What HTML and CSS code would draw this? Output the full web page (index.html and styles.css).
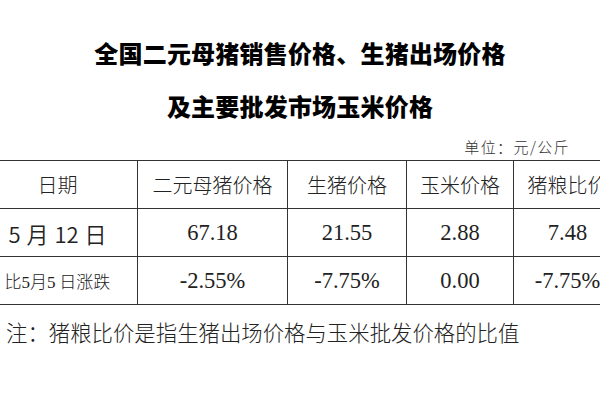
FILE: index.html
```html
<!DOCTYPE html>
<html lang="zh-CN">
<head>
<meta charset="utf-8">
<title>全国二元母猪销售价格</title>
<link rel="stylesheet" href="styles.css">
</head>
<body>
<div class="page">
  <h1 class="title">全国二元母猪销售价格、生猪出场价格<br>及主要批发市场玉米价格</h1>
  <div class="unit">单位：元/公斤</div>
  <table class="prices">
    <colgroup>
      <col class="c1"><col class="c2"><col class="c3"><col class="c4"><col class="c5">
    </colgroup>
    <tr class="head">
      <td>日期</td><td>二元母猪价格</td><td>生猪价格</td><td>玉米价格</td><td>猪粮比价</td>
    </tr>
    <tr class="data">
      <td class="date">5 月 12 日</td><td>67.18</td><td>21.55</td><td>2.88</td><td>7.48</td>
    </tr>
    <tr class="data">
      <td class="cmp">比<span class="num">5</span>月<span class="num">5</span> 日涨跌</td><td>-2.55%</td><td>-7.75%</td><td>0.00</td><td>-7.75%</td>
    </tr>
  </table>
  <p class="note">注：猪粮比价是指生猪出场价格与玉米批发价格的比值</p>
</div>
</body>
</html>
```
FILE: styles.css
```css
html, body {
  margin: 0;
  padding: 0;
  background: #fff;
  overflow: hidden;
}
.page {
  width: 600px;
  height: 400px;
  overflow: hidden;
  font-family: "Noto Sans CJK SC", "Noto Sans", sans-serif;
  color: #222;
}
.title {
  margin: 0;
  padding-top: 26px;
  font-size: 24px;
  line-height: 53px;
  font-weight: 900;
  color: #000;
  text-align: center;
  letter-spacing: 0.2px;
}
.unit {
  height: 28px;
  padding-right: 30px;
  text-align: right;
  font-size: 15px;
  line-height: 30px;
  letter-spacing: 1.4px;
  font-weight: 300;
  color: #333;
}
.prices {
  border-collapse: collapse;
  margin-left: -23px;
  table-layout: fixed;
  width: 644px;
}
.c1 { width: 160px; }
.c2 { width: 150px; }
.c3 { width: 119px; }
.c4 { width: 107px; }
.c5 { width: 108px; }
.prices td {
  border: 1px solid #333;
  height: 47px;
  padding: 0;
  text-align: center;
  white-space: nowrap;
  overflow: hidden;
}
.head td {
  font-size: 20px;
  font-weight: 300;
  color: #222;
}
.data td {
  font-family: "Liberation Serif", "Times New Roman", serif;
  font-size: 22.5px;
  color: #222;
}
.data td.date {
  font-family: "Noto Sans CJK SC", sans-serif;
  font-size: 22px;
  font-weight: 350;
  word-spacing: 1px;
}
.data td.cmp {
  font-family: "Noto Sans CJK SC", sans-serif;
  font-size: 17px;
  font-weight: 300;
}
.cmp .num {
  font-family: "Liberation Serif", serif;
}
.note {
  margin: 12px 0 0 6px;
  font-size: 21.4px;
  line-height: 30px;
  font-weight: 300;
  color: #222;
}
```
